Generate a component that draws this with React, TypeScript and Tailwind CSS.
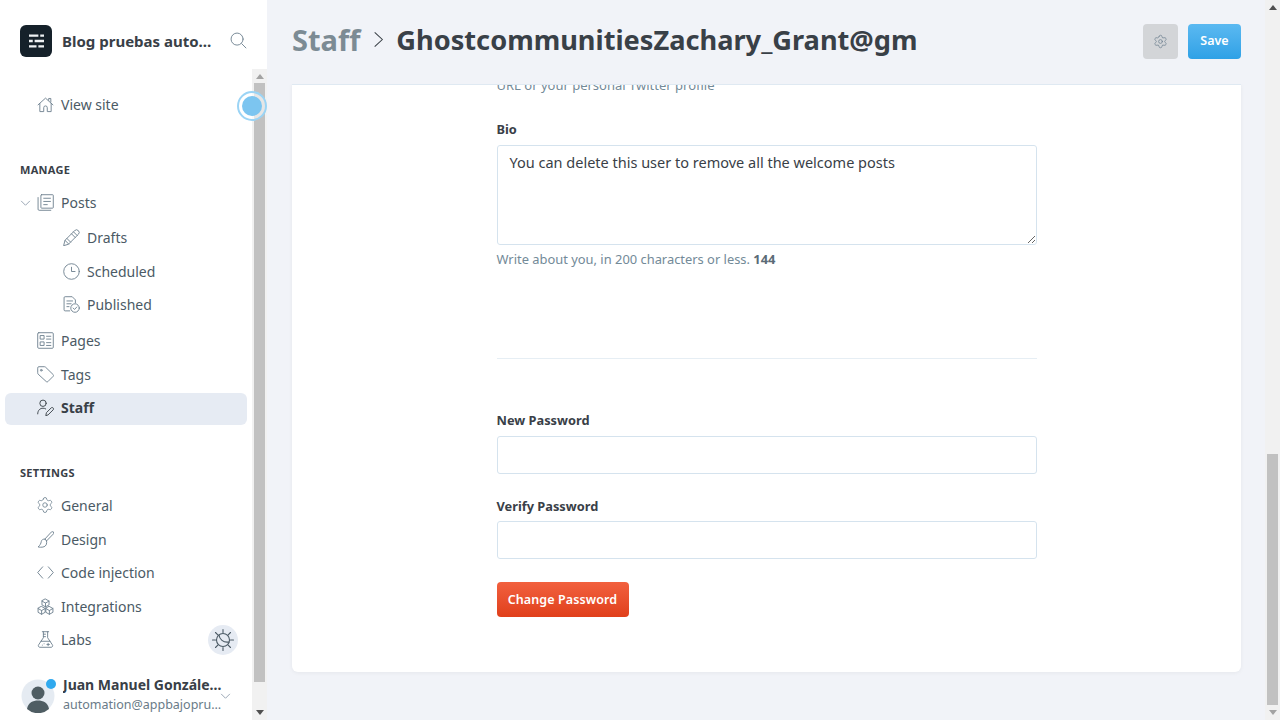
import type { ReactNode } from "react";
import { Settings } from "lucide-react";

const font = { ui: "font-['Noto_Sans','Open_Sans',sans-serif]" };

function Icon({ children, className = "" }: { children: ReactNode; className?: string }) {
  return (
    <svg
      viewBox="0 0 24 24"
      fill="none"
      stroke="currentColor"
      strokeWidth="1.3"
      strokeLinecap="round"
      strokeLinejoin="round"
      className={`h-[17px] w-[17px] shrink-0 text-[#6f8290] ${className}`}
    >
      {children}
    </svg>
  );
}

const icons = {
  home: (
    <Icon>
      <path d="M1.500 12.500 12 3l10.500 9.500" />
      <path d="M4 10.500V22h5.500v-5.500a2.500 2.500 0 0 1 5 0V22H20V10.500" />
      <path d="M16.500 6V3.500h3v5" />
    </Icon>
  ),
  posts: (
    <Icon>
      <rect x="5.500" y="1" width="17.500" height="19" rx="1" />
      <path d="M9.500 6h9.500M9.500 10.500h9.500M9.500 15h5" />
      <path d="M1.500 5v16.500a1.500 1.500 0 0 0 1.500 1.500h16.500" />
    </Icon>
  ),
  drafts: (
    <Icon>
      <path d="m1 23 1.800-7L16.500 2.300a3.400 3.400 0 0 1 5.200 5.200L8 21.200z" />
      <path d="m2.800 16 5.200 5.200M14.800 4l5.200 5.200M5.500 13.300l5.200 5.200M12 6.800l5.200 5.200" />
    </Icon>
  ),
  clock: (
    <Icon>
      <circle cx="12" cy="12" r="11" />
      <path d="M12 6V12h5" />
    </Icon>
  ),
  published: (
    <Icon>
      <path d="M9.500 21H3a1.500 1.500 0 0 1-1.500-1.500V2.500A1.500 1.500 0 0 1 3 1h10l4.500 4.500v4" />
      <path d="M5.500 7h8M5.500 11h6M5.500 15h3" />
      <circle cx="17" cy="17" r="6" />
      <path d="m14.300 17 2 2 3.200-3.500" />
    </Icon>
  ),
  pages: (
    <Icon>
      <rect x="1" y="1" width="22" height="22" rx="1.500" />
      <path d="M5 5h5v5H5zM5 14h5v5H5zM13.500 6h6M13.500 10h6M13.500 15h6M13.500 19h6" />
    </Icon>
  ),
  tag: (
    <Icon>
      <path d="M1 2.500A1.500 1.500 0 0 1 2.500 1h8a2 2 0 0 1 1.500.6l11 10.700a1.500 1.500 0 0 1 0 2.100l-7.700 7.700a1.500 1.500 0 0 1-2.100 0L1.600 11.500A2 2 0 0 1 1 10z" />
      <circle cx="6" cy="6" r="1.200" />
    </Icon>
  ),
  staff: (
    <Icon className="text-[#394047]">
      <circle cx="8.500" cy="6" r="4.500" />
      <path d="M1 21c0-5 3.200-8 7.500-8 1.500 0 2.800.4 3.800 1" />
      <path d="m12.500 23 .8-3.700 7-7a2 2 0 0 1 2.700 2.800l-7 7z" />
    </Icon>
  ),
  design: (
    <Icon>
      <path d="M23 1.500c-.8-.8-2-.8-2.800 0L11 11.500l2.500 2.500 9.500-9.700c.8-.8.800-2 0-2.800z" />
      <path d="M11 11.500c-2.500-.5-4.500 1-5 3.500-.4 2.500-1.500 5-4.500 7.500 4.500 1 10 .5 11.500-3 .8-2 .8-4 .5-5.500z" />
    </Icon>
  ),
  code: (
    <Icon>
      <path d="M8 4 1 12l7 8M16 4l7 8-7 8" />
    </Icon>
  ),
  integrations: (
    <Icon>
      <path d="m12 1.500 5 2.800v5.400l-5 2.800-5-2.800V4.300zM7 4.300l5 2.900 5-2.900M12 7.200v5.300" />
      <path d="m6.500 12 5 2.800v5.400l-5 2.800-5-2.800v-5.400zM1.500 14.800l5 2.900 5-2.900M6.500 17.700V23" />
      <path d="m17.500 12 5 2.800v5.400l-5 2.800-5-2.800v-5.400zM12.500 14.800l5 2.900 5-2.900M17.500 17.700V23" />
    </Icon>
  ),
  labs: (
    <Icon>
      <path d="M7.500 1h9M9 1v8.500L2.300 19.500A2.200 2.200 0 0 0 4 23h16a2.200 2.200 0 0 0 1.700-3.500L15 9.500V1" />
      <path d="M5.500 14.500h13M9 4.500h3M9 8h3" />
      <path d="M14 19h3.500M15.700 17.300v3.400M7.500 20h.01M10 18h.01" />
    </Icon>
  ),
};

function NavRow({
  icon,
  label,
  sub,
  active,
  className = "",
}: {
  icon: ReactNode;
  label: string;
  sub?: boolean;
  active?: boolean;
  className?: string;
}) {
  return (
    <a
      className={`flex h-8 items-center rounded-md text-[14px] ${sub ? "gap-[7px] pl-[58px]" : "gap-[7px] pl-[32px]"} ${
        active ? "bg-[#e6ebf3] pb-[4px] font-bold text-[#394047]" : "pb-[2px] text-[#4b5a65]"
      } ${className}`}
    >
      {icon}
      <span>{label}</span>
    </a>
  );
}

function Field({ label, gap, className = "" }: { label: string; gap: string; className?: string }) {
  return (
    <div className={className}>
      <label className="block text-[12.800px] font-bold leading-[18px] text-[#394047]">{label}</label>
      <input className={`${gap} block h-[38px] w-full rounded-[3px] border border-[#d5e3ee] bg-white`} />
    </div>
  );
}

function Scrollbar({ upDark, className = "" }: { upDark?: boolean; className?: string }) {
  return (
    <div className={`flex w-[15px] shrink-0 flex-col items-center justify-between bg-[#f1f1f1] ${className}`}>
      <div className="flex h-[15px] w-full items-center justify-center">
        <span className={`h-0 w-0 border-x-[4px] border-b-[5px] border-x-transparent ${upDark ? "border-b-[#505050]" : "border-b-[#a3a3a3]"}`} />
      </div>
      <div className="flex h-[15px] w-full items-center justify-center">
        <span className={`h-0 w-0 border-x-[4px] border-t-[5px] border-x-transparent ${upDark ? "border-t-[#a3a3a3]" : "border-t-[#505050]"}`} />
      </div>
    </div>
  );
}

export default function App() {
  return (
    <div className={`flex h-screen w-full overflow-hidden bg-[#f1f3f8] ${font.ui}`}>
      {/* Sidebar */}
      <aside className="relative flex h-full w-[267px] shrink-0 flex-col bg-white">
        <div className="flex h-[69px] shrink-0 items-start pl-[20px] pt-[25px]">
          <div className="flex h-8 w-8 items-center justify-center rounded-md bg-[#15212a]">
            <svg viewBox="0 0 16 14" className="h-[14px] w-[15px]" fill="#eef1f3">
              <path d="M0 0h10v2.500H0zM12 0h4v2.500h-4zM0 5.700h4v2.500H0zM6 5.700h10v2.500H6zM0 11.500h8V14H0zM10 11.500h6V14h-6z" />
            </svg>
          </div>
          <div className="ml-[10px] w-[152px] truncate pt-[6px] text-[15px] font-bold leading-5 text-[#394047]">Blog pruebas automatizadas</div>
          <svg viewBox="0 0 24 24" className="ml-[16px] mt-[7px] h-[17px] w-[17px] text-[#6f8290]" fill="none" stroke="currentColor" strokeWidth="1.300" strokeLinecap="round">
            <circle cx="10" cy="10" r="8.500" />
            <path d="m16.500 16.500 6 6" />
          </svg>
        </div>

        <div className="flex min-h-0 flex-1">
          <div className="min-w-0 flex-1 pl-[5px] pr-[5px] pt-[20px]">
            <NavRow icon={icons.home} label="View site" />

            <div className="ml-[15px] mt-[41px] h-4 text-[11px] font-bold uppercase leading-4 tracking-[0.3px] text-[#394047]">Manage</div>
            <div className="relative mt-[9px]">
              <svg viewBox="0 0 12 8" className="absolute left-[15px] top-[13px] h-[7px] w-[11px] text-[#8e9cac]" fill="none" stroke="currentColor">
                <path d="m1 1 5 5 5-5" />
              </svg>
              <NavRow icon={icons.posts} label="Posts" />
            </div>
            <NavRow sub icon={icons.drafts} label="Drafts" className="mt-[3px]" />
            <NavRow sub icon={icons.clock} label="Scheduled" className="mt-[2px]" />
            <NavRow sub icon={icons.published} label="Published" className="mt-[1px]" />
            <NavRow icon={icons.pages} label="Pages" className="mt-[4px]" />
            <NavRow icon={icons.tag} label="Tags" className="mt-[2px]" />
            <NavRow active icon={icons.staff} label="Staff" className="mt-[2px]" />

            <div className="ml-[15px] mt-[40px] h-4 text-[11px] font-bold uppercase leading-4 tracking-[0.3px] text-[#394047]">Settings</div>
            <NavRow icon={<Settings size={18} strokeWidth={1.1} className="-ml-[1px] shrink-0 text-[#6f8290]" />} label="General" className="mt-[9px]" />
            <NavRow icon={icons.design} label="Design" className="mt-[2px]" />
            <NavRow icon={icons.code} label="Code injection" className="mt-[1px]" />
            <NavRow icon={icons.integrations} label="Integrations" className="mt-[2px]" />
            <NavRow icon={icons.labs} label="Labs" className="mt-[1px]" />

            <div className="mt-[23px] flex items-start pl-[16px]">
              <div className="relative h-[34px] w-[34px] shrink-0 overflow-visible">
                <svg viewBox="0 0 34 34" className="h-[34px] w-[34px]">
                  <circle cx="17" cy="17" r="16.500" fill="#e5ebf2" />
                  <circle cx="17" cy="14" r="6.500" fill="#4f5d63" />
                  <path d="M6 30c1-6.500 6-8.500 11-8.500s10 2 11 8.500a16.500 16.500 0 0 1-22 0z" fill="#4f5d63" />
                </svg>
                <span className="absolute right-[-1px] top-0 h-[10px] w-[10px] rounded-full bg-[#30a9ee]" />
              </div>
              <div className="ml-[8px] w-[160px] min-w-0 -mt-[4px]">
                <div className="truncate text-[14px] font-bold leading-5 text-[#394047]">Juan Manuel González Arias</div>
                <div className="truncate text-[12.500px] leading-5 text-[#6a7b88]">automation@appbajopruebas.com</div>
              </div>
              <svg viewBox="0 0 12 8" className="ml-[-3px] mt-[14px] h-[7px] w-[11px] text-[#8e9cac]" fill="none" stroke="currentColor">
                <path d="m1 1 5 5 5-5" />
              </svg>
            </div>
          </div>
          <div className="relative w-[15px] shrink-0">
            <Scrollbar className="h-full" />
            <div className="absolute left-[2px] top-[14px] h-[599px] w-[11px] bg-[#c1c1c1]" />
          </div>
        </div>

        {/* Overlays */}
        <div className="absolute left-[237px] top-[91px] flex h-[30px] w-[30px] items-center justify-center rounded-full border-2 border-[#9bd4f5] bg-white/60">
          <span className="h-[20px] w-[20px] rounded-full bg-[#7cc5f0]" />
        </div>
        <div className="absolute left-[208px] top-[625px] flex h-[30px] w-[30px] items-center justify-center rounded-full bg-[#e6ebf3]">
          <svg viewBox="0 0 24 24" className="h-[24px] w-[24px] text-[#4b5a65]" fill="none" stroke="currentColor" strokeWidth="1.100" strokeLinecap="round">
            <circle cx="12" cy="12" r="6.500" />
            <path d="M12 1.500v3M12 19.500v3M1.500 12h3M19.500 12h3M4.500 4.500l2.300 2.300M17.200 17.200l2.300 2.300M4.500 19.500l2.300-2.300M17.200 6.800l2.300-2.300" />
            <path d="M8 7c.5 4 4 8 10 7" />
          </svg>
        </div>
      </aside>

      {/* Main */}
      <main className="flex min-w-0 flex-1 flex-col">
        <header className="flex h-[84px] shrink-0 items-start pl-[25px] pr-[24px] pt-[24px]">
          <h1 className="-mt-[1px] flex min-w-0 flex-1 items-center text-[27.200px] font-bold leading-[33px] text-[#394047]">
            <span className="text-[29px] text-[#7c8b94]">Staff</span>
            <svg viewBox="0 0 12 20" className="ml-[12px] mr-[11px] h-[17px] w-[13px] text-[#394047]" fill="none" stroke="currentColor" strokeWidth="1.200">
              <path d="m1.500 1.500 9 8.500-9 8.500" />
            </svg>
            <span className="w-[522px] overflow-hidden whitespace-nowrap">GhostcommunitiesZachary_Grant@gmail.com</span>
          </h1>
          <button className="flex h-[35px] w-[35px] items-center justify-center rounded-[4px] bg-[#d3d5d8]">
            <Settings size={15} strokeWidth={1.2} className="text-[#6f8290]" />
          </button>
          <button className="ml-[10px] h-[35px] w-[53px] rounded-[4px] bg-gradient-to-b from-[#5ab9f1] to-[#2ea1e6] text-[12.500px] font-semibold text-white">
            Save
          </button>
        </header>

        <div className="min-h-0 flex-1 overflow-hidden pl-[25px] pr-[24px]">
          <section className="flex h-[588px] flex-col items-center overflow-hidden rounded-b-[6px] border-t border-[#dfe9f2] bg-white shadow-[0_1px_4px_rgba(0,0,0,0.05)]">
            <div className="w-[540px]">
              <p className="-mt-[9px] h-[19px] text-[13px] leading-[19px] text-[#738a98]">URL or your personal Twitter profile</p>
              <label className="mt-[25px] block text-[12.800px] font-bold leading-[18px] text-[#394047]">Bio</label>
              <textarea
                readOnly
                className="mt-[7px] block h-[100px] w-full rounded-[3px] border border-[#d5e3ee] px-3 py-[6px] text-[14.500px] leading-[21px] text-[#394047] outline-none"
                value="You can delete this user to remove all the welcome posts"
              />
              <p className="mt-[5px] text-[12.900px] leading-[19px] text-[#738a98]">
                Write about you, in 200 characters or less. <b className="text-[#5b6b76]">144</b>
              </p>
              <hr className="mt-[89px] border-[#e6eef4]" />
              <Field label="New Password" gap="mt-[7px]" className="mt-[52px]" />
              <Field label="Verify Password" gap="mt-[6px]" className="mt-[23px]" />
              <button className="mt-[23px] h-[35px] w-[132px] rounded-[4px] bg-gradient-to-b from-[#f2603e] to-[#e03f1a] pt-[1px] text-[12.500px] font-semibold tracking-[0.1px] text-white">
                Change Password
              </button>
            </div>
          </section>
        </div>
      </main>

      <div className="relative h-full w-[15px] shrink-0">
        <Scrollbar upDark className="h-full" />
        <div className="absolute left-[2px] top-[454px] h-[251px] w-[11px] bg-[#c1c1c1]" />
      </div>
    </div>
  );
}
